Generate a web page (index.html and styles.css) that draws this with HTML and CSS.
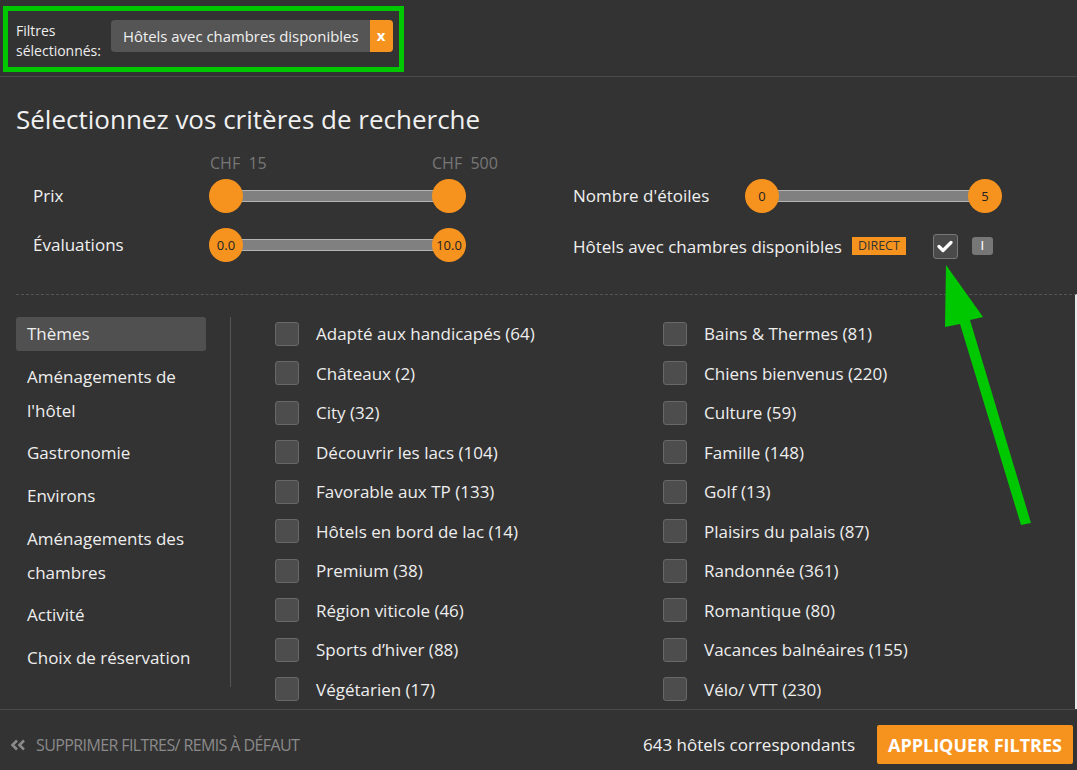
FILE: index.html
```html
<!DOCTYPE html>
<html lang="fr">
<head>
    <meta charset="UTF-8">
    <meta name="viewport" content="width=device-width, initial-scale=1.0">
    <title>Filtres - Recherche d'hôtels</title>
    <link rel="stylesheet" href="styles.css">
</head>
<body>
    <header class="topbar">
        <div class="selected-filters">
            <p class="selected-label">Filtres sélectionnés:</p>
            <div class="tag">
                <span class="tag-text">Hôtels avec chambres disponibles</span>
                <span class="tag-close">x</span>
            </div>
        </div>
    </header>

    <main class="search">
        <h1 class="search-title">Sélectionnez vos critères de recherche</h1>

        <div class="criteria">
            <div class="price-labels">
                <span class="price-min">CHF&nbsp; 15</span>
                <span class="price-max">CHF&nbsp; 500</span>
            </div>

            <span class="crit-label col-1">Prix</span>
            <div class="range col-2">
                <span class="handle"></span>
                <span class="track"></span>
                <span class="handle"></span>
            </div>
            <span class="crit-label col-4">Nombre d'étoiles</span>
            <div class="range col-5">
                <span class="handle">0</span>
                <span class="track"></span>
                <span class="handle">5</span>
            </div>

            <span class="crit-label col-1">Évaluations</span>
            <div class="range col-2">
                <span class="handle">0.0</span>
                <span class="track"></span>
                <span class="handle">10.0</span>
            </div>
            <div class="hotel-toggle">
                <span class="crit-label">Hôtels avec chambres disponibles</span>
                <span class="badge">DIRECT</span>
                <span class="check checked">
                    <svg width="16" height="13" viewBox="0 0 16 13"><path d="M2 6.5 L6 10.5 L14 2.5" fill="none" stroke="#fff" stroke-width="3.2" stroke-linecap="round" stroke-linejoin="round"/></svg>
                </span>
                <span class="info">I</span>
            </div>
        </div>

        <section class="themes">
            <nav class="theme-nav">
                <a class="nav-item active">Thèmes</a>
                <a class="nav-item">Aménagements de l'hôtel</a>
                <a class="nav-item">Gastronomie</a>
                <a class="nav-item">Environs</a>
                <a class="nav-item">Aménagements des chambres</a>
                <a class="nav-item">Activité</a>
                <a class="nav-item">Choix de réservation</a>
            </nav>

            <div class="options">
                <label class="option"><span class="box"></span>Adapté aux handicapés (64)</label>
                <label class="option"><span class="box"></span>Châteaux (2)</label>
                <label class="option"><span class="box"></span>City (32)</label>
                <label class="option"><span class="box"></span>Découvrir les lacs (104)</label>
                <label class="option"><span class="box"></span>Favorable aux TP (133)</label>
                <label class="option"><span class="box"></span>Hôtels en bord de lac (14)</label>
                <label class="option"><span class="box"></span>Premium (38)</label>
                <label class="option"><span class="box"></span>Région viticole (46)</label>
                <label class="option"><span class="box"></span>Sports d’hiver (88)</label>
                <label class="option"><span class="box"></span>Végétarien (17)</label>
                <label class="option"><span class="box"></span>Bains &amp; Thermes (81)</label>
                <label class="option"><span class="box"></span>Chiens bienvenus (220)</label>
                <label class="option"><span class="box"></span>Culture (59)</label>
                <label class="option"><span class="box"></span>Famille (148)</label>
                <label class="option"><span class="box"></span>Golf (13)</label>
                <label class="option"><span class="box"></span>Plaisirs du palais (87)</label>
                <label class="option"><span class="box"></span>Randonnée (361)</label>
                <label class="option"><span class="box"></span>Romantique (80)</label>
                <label class="option"><span class="box"></span>Vacances balnéaires (155)</label>
                <label class="option"><span class="box"></span>Vélo/ VTT (230)</label>
            </div>
        </section>
    </main>

    <footer class="footer">
        <a class="reset">
            <svg width="16" height="12" viewBox="0 0 16 12"><path d="M7 1.5 L2.5 6 L7 10.5 M14 1.5 L9.5 6 L14 10.5" fill="none" stroke="#8a8a8a" stroke-width="2.6"/></svg>
            SUPPRIMER FILTRES/ REMIS À DÉFAUT
        </a>
        <span class="count">643 hôtels correspondants</span>
        <button class="apply-button">APPLIQUER FILTRES</button>
    </footer>

    <!-- flèche d'annotation -->
    <svg class="annotation" width="1077" height="770" viewBox="0 0 1077 770">
        <polygon points="946,265 983,317 970,320 1031,523 1021,525 960,324 945,327" fill="#00c800"/>
    </svg>
</body>
</html>
```

FILE: styles.css
```css
* {
    box-sizing: border-box;
    margin: 0;
    padding: 0;
}

body {
    background-color: #333;
    color: #f0f0f0;
    font-family: 'Open Sans', 'DejaVu Sans', sans-serif;
    font-size: 17px;
    width: 1077px;
    height: 770px;
    overflow: hidden;
    position: relative;
}

/* barre des filtres choisis */
.topbar {
    height: 77px;
    border-bottom: 1px solid #4a4a4a;
    padding: 6px 0 0 3px;
}

.selected-filters {
    display: inline-flex;
    align-items: flex-start;
    height: 66px;
    border: 5px solid #00c800;
    padding: 0 6px 0 8px;
}

.selected-label {
    width: 95px;
    margin-top: 10px;
    font-size: 14px;
    line-height: 20px;
    color: #eee;
}

.tag {
    display: flex;
    margin-top: 9px;
    height: 32px;
    background: #555;
    border-radius: 4px;
    overflow: hidden;
    white-space: nowrap;
}

.tag-text {
    padding: 0 11px 0 12px;
    line-height: 32px;
    font-size: 14.9px;
}

.tag-close {
    width: 23px;
    background: #f6931f;
    color: #fff;
    font-weight: bold;
    text-align: center;
    line-height: 30px;
    font-size: 15px;
}

/* critères */
.search {
    padding-left: 16px;
}

.search-title {
    font-size: 26px;
    font-weight: normal;
    line-height: 34px;
    margin-top: 25px;
}

.criteria {
    display: grid;
    grid-template-columns: 176px 257px 107px 172px 257px;
    grid-template-rows: 20px 49px 49px;
    align-items: center;
    margin-top: 15px;
    padding-left: 17px;
}

.price-labels {
    grid-column: 2;
    display: flex;
    color: #777;
    font-size: 16px;
    line-height: 20px;
    padding: 3px 0 0 1px;
    white-space: nowrap;
}

.price-min {
    width: 222px;
    flex-shrink: 0;
}

.price-max {
    flex-shrink: 0;
}

.col-1 { grid-column: 1; }
.col-2 { grid-column: 2; }
.col-4 { grid-column: 4; }
.col-5 { grid-column: 5; }

.crit-label {
    white-space: nowrap;
}

.range {
    display: flex;
    align-items: center;
    height: 34px;
}

.handle {
    position: relative;
    z-index: 1;
    width: 34px;
    height: 34px;
    border-radius: 50%;
    background: #f6931f;
    color: #222;
    font-size: 13px;
    line-height: 34px;
    text-align: center;
    flex-shrink: 0;
}

.track {
    flex: 1;
    margin: 0 -17px;
    height: 12px;
    background: #808080;
    border-top: 1px solid #b4b4b4;
    border-bottom: 1px solid #b4b4b4;
}

.hotel-toggle {
    grid-column: 4 / 6;
    display: flex;
    align-items: center;
    margin-top: 3px;
}

.badge {
    margin-left: 10px;
    padding: 0 6px;
    background: #f6931f;
    color: #333;
    font-size: 12.5px;
    line-height: 18px;
}

.check {
    display: flex;
    align-items: center;
    justify-content: center;
    width: 25px;
    height: 25px;
    margin-left: 27px;
    background: #4a4a4a;
    border: 1px solid #777;
    border-radius: 3px;
}

.info {
    margin-left: 14px;
    width: 21px;
    height: 18px;
    background: #777;
    border-radius: 3px;
    color: #fff;
    font-family: 'Liberation Sans', sans-serif;
    font-size: 13px;
    line-height: 18px;
    text-align: center;
}

/* thèmes */
.themes {
    display: flex;
    align-items: flex-start;
    height: 415px;
    margin-top: 25px;
    border-top: 1px dashed #555;
    border-right: 2px solid #e8e8e8;
}

.theme-nav {
    display: flex;
    flex-direction: column;
    gap: 8.7px;
    width: 215px;
    height: 370px;
    margin-top: 22px;
    padding-right: 24px;
    border-right: 1px solid #555;
}

.nav-item {
    padding: 0 11px;
    line-height: 34px;
    border-radius: 3px;
    color: #eee;
}

.nav-item.active {
    background: #505050;
}

.options {
    display: grid;
    grid-auto-flow: column;
    grid-template-rows: repeat(10, 39.5px);
    grid-template-columns: 388px 388px;
    margin-top: 19px;
    padding-left: 44px;
}

.option {
    display: flex;
    align-items: center;
    gap: 17px;
    color: #eee;
    white-space: nowrap;
}

.box {
    width: 24px;
    height: 24px;
    background: #4d4d4d;
    border: 1px solid #686868;
    border-radius: 3px;
}

/* bas de page */
.footer {
    display: flex;
    align-items: center;
    height: 61px;
    border-top: 1px solid #4a4a4a;
    padding: 9px 4px 0 10px;
}

.reset {
    display: flex;
    align-items: center;
    gap: 10px;
    color: #8a8a8a;
    font-size: 16px;
    font-stretch: 90%;
    letter-spacing: -0.6px;
    white-space: nowrap;
}

.count {
    margin-left: auto;
}

.apply-button {
    margin-left: 22px;
    width: 196px;
    height: 39px;
    background: #f6931f;
    color: #fff;
    border: none;
    border-radius: 2px;
    font-family: 'Open Sans', sans-serif;
    font-weight: bold;
    font-size: 18px;
}

.annotation {
    position: absolute;
    top: 0;
    left: 0;
    pointer-events: none;
}
```
